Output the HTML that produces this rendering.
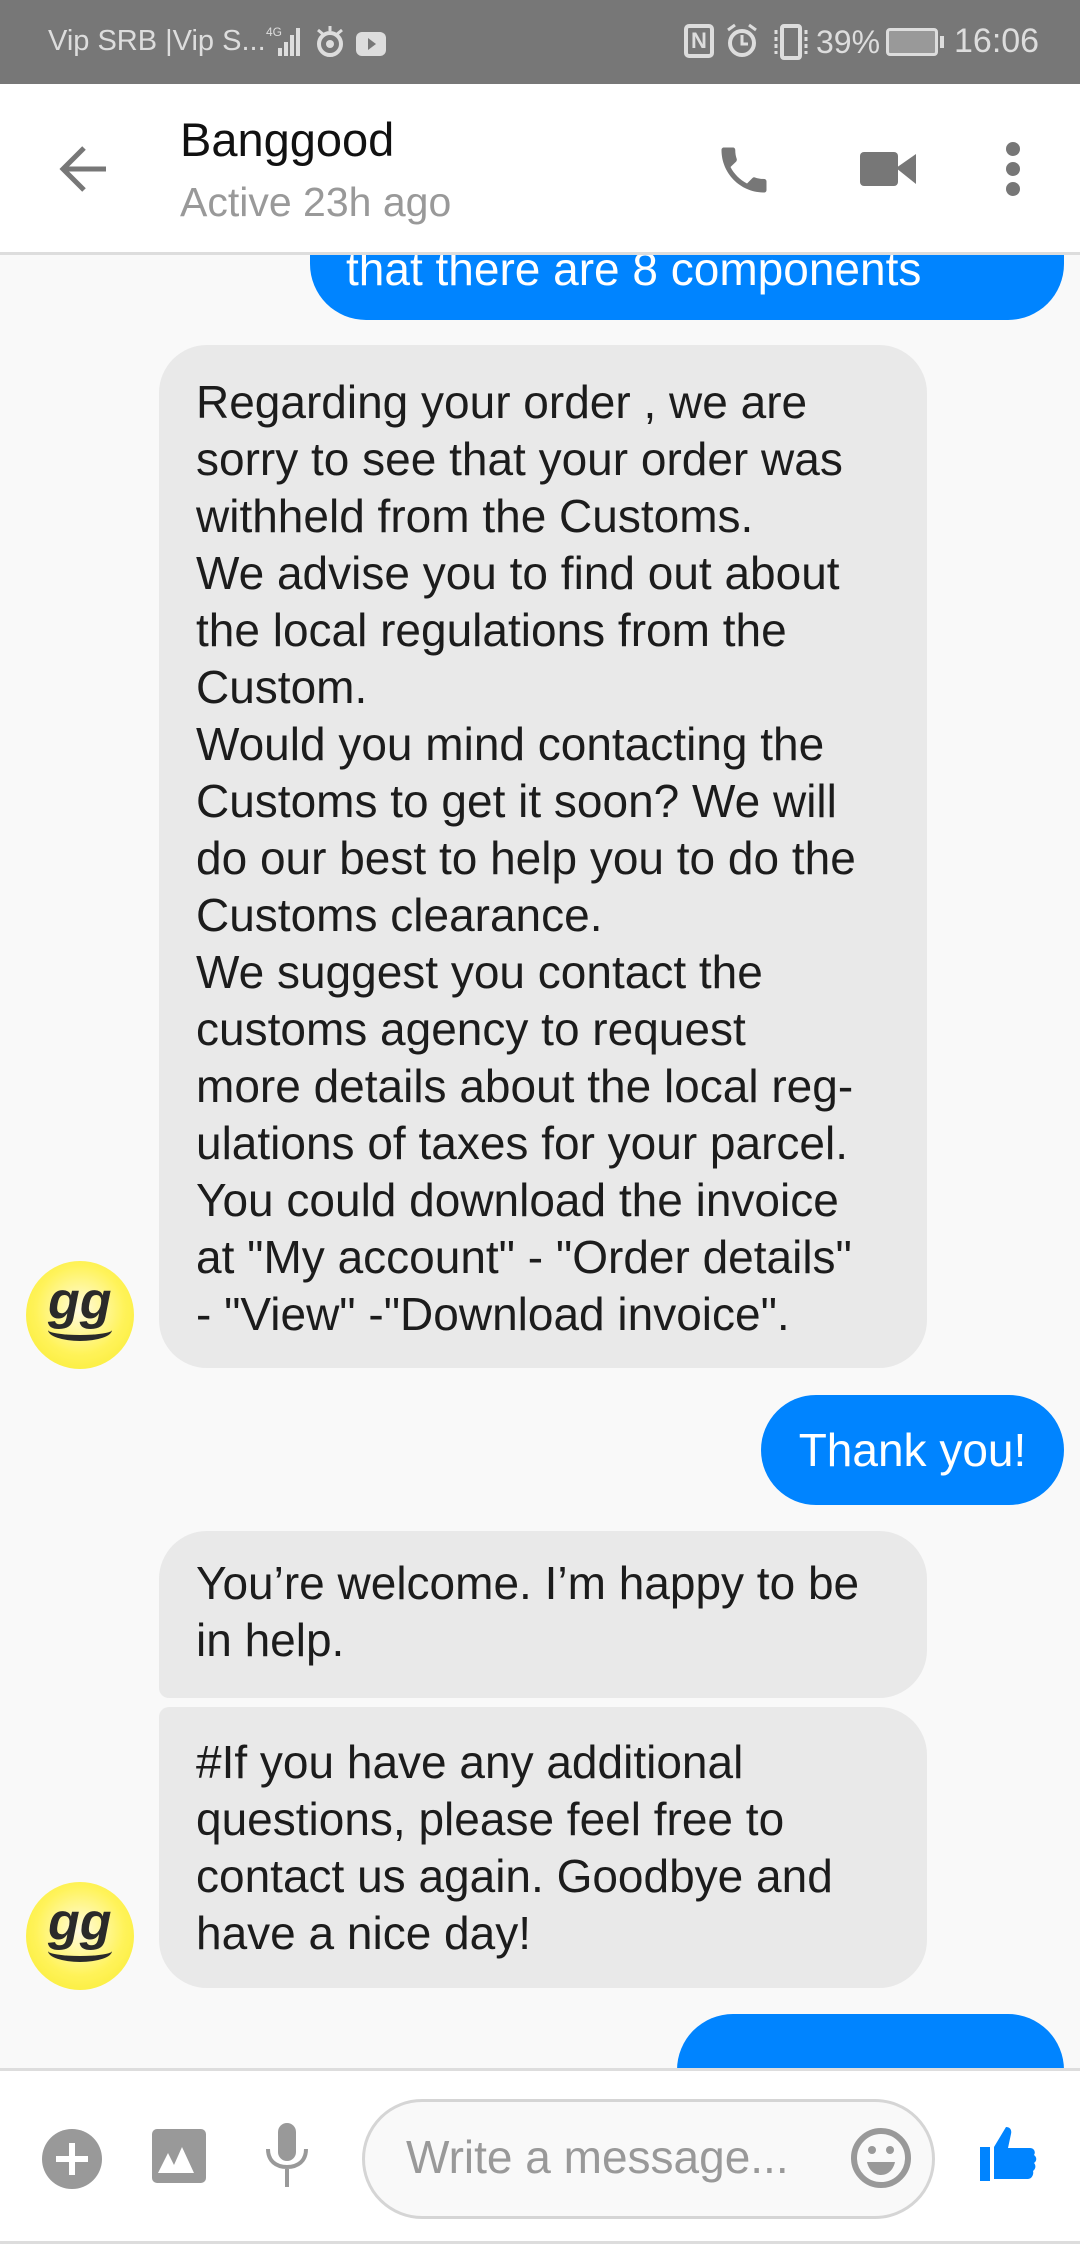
<!DOCTYPE html>
<html><head><meta charset="utf-8"><style>
*{margin:0;padding:0;box-sizing:border-box}
body{width:1080px;height:2244px;background:#f9f9f9;font-family:"Liberation Sans",sans-serif;position:relative;overflow:hidden}
.abs{position:absolute}
.sb{left:0;top:0;width:1080px;height:84px;background:#777;color:#ddd;font-size:29px}
.hdr{left:0;top:84px;width:1080px;height:171px;background:#fff;border-bottom:3px solid #ddd;z-index:5}
.b{position:absolute;border-radius:48px;font-size:46px;line-height:57px;color:#1c1c1c;white-space:nowrap}
.g{background:#e9e9e9}
.bl{background:#0084ff;color:#fff}
.av{position:absolute;width:108px;height:108px;border-radius:50%;background:radial-gradient(circle at 50% 45%,#fffbe0 0%,#fff35a 55%,#f7ea2a 100%)}
.av span{position:absolute;left:22px;top:10px;font:italic bold 52px "Liberation Sans",sans-serif;color:#2a2a2a;letter-spacing:0px}
.av i{position:absolute;left:22px;top:58px;width:64px;height:22px;border-bottom:6px solid #2a2a2a;border-radius:0 0 50% 50%}
.bot{left:0;top:2068px;width:1080px;height:176px;background:#fff;border-top:3px solid #ddd;border-bottom:3px solid #ddd;z-index:5}
</style></head><body>
<div class="abs sb">
<div class="abs" style="left:48px;top:25px">Vip SRB |Vip S...</div>
<svg class="abs" style="left:264px;top:22px" width="140" height="40" viewBox="0 0 140 40"><text x="2" y="14" font-size="12" fill="#ddd" font-family="Liberation Sans">4G</text><rect x="14" y="26" width="4" height="8" fill="#ddd"/><rect x="20" y="20" width="4" height="14" fill="#ddd"/><rect x="26" y="13" width="4" height="21" fill="#ddd"/><rect x="32" y="6" width="4" height="28" fill="#ddd"/><circle cx="66" cy="22" r="11" fill="none" stroke="#ddd" stroke-width="4"/><circle cx="66" cy="22" r="4" fill="#ddd"/><path d="M54 8l6 5M78 8l-6 5M66 4v5" stroke="#ddd" stroke-width="3"/><rect x="92" y="10" width="30" height="24" rx="6" fill="#ddd"/><path d="M104 16l8 6-8 6z" fill="#777"/></svg>
<div class="abs" style="left:684px;top:24px;width:30px;height:34px;border:4px solid #ddd;border-radius:5px;font:bold 22px 'Liberation Sans';text-align:center;line-height:26px">N</div>
<svg class="abs" style="left:724px;top:22px" width="40" height="40"><circle cx="18" cy="21" r="12" fill="none" stroke="#ddd" stroke-width="4"/><path d="M18 13v9h6M4 8l7-5M32 8l-7-5" stroke="#ddd" stroke-width="3" fill="none"/></svg>
<svg class="abs" style="left:768px;top:22px" width="50" height="40"><rect x="14" y="4" width="18" height="32" rx="2" fill="none" stroke="#ddd" stroke-width="4"/><path d="M8 8v24M38 8v24" stroke="#ddd" stroke-width="3" stroke-dasharray="4 3"/></svg>
<div class="abs" style="left:816px;top:24px;font-size:32px">39%</div>
<div class="abs" style="left:886px;top:28px;width:52px;height:28px;border:3px solid #ddd;border-radius:4px;background:#999"></div>
<div class="abs" style="left:940px;top:36px;width:4px;height:12px;background:#ddd"></div>
<div class="abs" style="left:954px;top:22px;font-size:34px">16:06</div>
</div>
<div class="abs hdr">
<svg class="abs" style="left:58px;top:60px" width="52" height="50"><path d="M48 25H6M26 4L5 25l21 21" stroke="#777" stroke-width="5" fill="none"/></svg>
<div class="abs" style="left:180px;top:28px;font-size:47px;color:#111">Banggood</div>
<div class="abs" style="left:180px;top:95px;font-size:41px;color:#999">Active 23h ago</div>
<svg class="abs" style="left:712px;top:56px" width="64" height="60" viewBox="0 0 24 24"><path fill="#777" d="M6.6 10.8c1.4 2.8 3.8 5.1 6.6 6.6l2.2-2.2c.3-.3.7-.4 1-.2 1.1.4 2.3.6 3.6.6.6 0 1 .4 1 1V20c0 .6-.4 1-1 1C10.6 21 3 13.4 3 4c0-.6.4-1 1-1h3.5c.6 0 1 .4 1 1 0 1.3.2 2.5.6 3.6.1.3 0 .7-.2 1z"/></svg>
<svg class="abs" style="left:860px;top:66px" width="58" height="40"><rect x="0" y="2" width="38" height="34" rx="4" fill="#777"/><path d="M36 18L56 4v30z" fill="#777"/></svg>
<div class="abs" style="left:1006px;top:58px;width:14px;height:14px;border-radius:50%;background:#777;box-shadow:0 20px #777,0 40px #777"></div>
</div>
<div class="b bl" style="left:310px;top:150px;width:754px;height:170px;border-radius:0 0 56px 56px"><div class="abs" style="left:36px;top:94px;font-size:46px;line-height:50px">that there are 8 components</div></div>
<div class="b g" style="left:159px;top:345px;width:768px;height:1023px;padding:29px 0 0 37px">Regarding your order , we are<br>sorry to see that your order was<br>withheld from the Customs.<br>We advise you to find out about<br>the local regulations from the<br>Custom.<br>Would you mind contacting the<br>Customs to get it soon? We will<br>do our best to help you to do the<br>Customs clearance.<br>We suggest you contact the<br>customs agency to request<br>more details about the local reg-<br>ulations of taxes for your parcel.<br>You could download the invoice<br>at "My account" - "Order details"<br>- "View" -"Download invoice".</div>
<div class="av" style="left:26px;top:1261px"><span>gg</span><i></i></div>
<div class="b bl" style="left:761px;top:1395px;width:303px;height:110px;border-radius:55px;text-align:center;line-height:110px;font-size:46px">Thank you!</div>
<div class="b g" style="left:159px;top:1531px;width:768px;height:167px;border-radius:48px 48px 48px 10px;padding:24px 0 0 37px">You’re welcome. I’m happy to be<br>in help.</div>
<div class="b g" style="left:159px;top:1707px;width:768px;height:281px;border-radius:10px 48px 48px 48px;padding:27px 0 0 37px">#If you have any additional<br>questions, please feel free to<br>contact us again. Goodbye and<br>have a nice day!</div>
<div class="av" style="left:26px;top:1882px"><span>gg</span><i></i></div>
<div class="b bl" style="left:677px;top:2014px;width:387px;height:120px;border-radius:56px 56px 0 0"><div class="abs" style="left:38px;top:48px">I will thank you</div></div>
<div class="abs bot">
<svg class="abs" style="left:40px;top:56px" width="64" height="64"><circle cx="32" cy="32" r="30" fill="#999"/><path d="M32 16v32M16 32h32" stroke="#fff" stroke-width="6"/></svg>
<svg class="abs" style="left:152px;top:58px" width="56" height="56"><rect x="0" y="0" width="54" height="54" rx="5" fill="#999"/><path d="M6 44l10-20 6 12 8-18 12 26z" fill="#fff"/></svg>
<svg class="abs" style="left:264px;top:52px" width="46" height="66"><rect x="14" y="0" width="18" height="38" rx="9" fill="#999"/><path d="M4 26c0 12 8 18 19 18s19-6 19-18M23 44v20" stroke="#999" stroke-width="4" fill="none"/></svg>
<div class="abs" style="left:362px;top:28px;width:573px;height:120px;border:3px solid #d5d5d5;border-radius:60px;background:#f9f9f9"></div>
<div class="abs" style="left:406px;top:59px;font-size:46px;color:#999">Write a message...</div>
<svg class="abs" style="left:849px;top:55px" width="64" height="64"><circle cx="32" cy="32" r="27" fill="none" stroke="#999" stroke-width="6"/><circle cx="23" cy="24" r="4" fill="#999"/><circle cx="41" cy="24" r="4" fill="#999"/><path d="M18 36h28c-2 9-8 13-14 13s-12-4-14-13z" fill="#999"/></svg>
<svg class="abs" style="left:978px;top:52px" width="62" height="60"><rect x="2" y="24" width="10" height="34" fill="#0084ff"/><path d="M16 56V24l12-20c4 0 6 3 5 7l-3 14h22c4 0 6 4 4 7 3 2 3 6 0 8 2 2 2 6-1 8 1 3-1 8-5 8z" fill="#0084ff"/></svg>
</div>
</body></html>
